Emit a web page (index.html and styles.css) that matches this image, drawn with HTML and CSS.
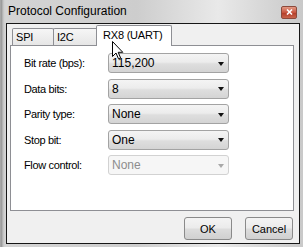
FILE: index.html
```html
<!DOCTYPE html>
<html lang="en">
<head>
    <meta charset="UTF-8">
    <title>Protocol Configuration</title>
    <link rel="stylesheet" href="styles.css">
</head>
<body>
    <div class="window">
        <div class="titlebar">
            <span class="title">Protocol Configuration</span>
            <span class="close">
                <svg width="7" height="6" viewBox="0 0 7 6"><path d="M1 0.5 L6 5.5 M6 0.5 L1 5.5" stroke="#fff" stroke-width="1.6"/></svg>
            </span>
        </div>

        <div class="client">
            <!-- Tabs -->
            <div class="tabs">
                <div class="tab tab-spi">SPI</div>
                <div class="tab tab-i2c">I2C</div>
                <div class="tab active">RX8 (UART)</div>
            </div>

            <div class="panel">
                <div class="row">
                    <span class="label">Bit rate (bps):</span>
                    <div class="combo"><span>115,200</span><i class="arrow"></i></div>
                </div>
                <div class="row">
                    <span class="label">Data bits:</span>
                    <div class="combo"><span>8</span><i class="arrow"></i></div>
                </div>
                <div class="row">
                    <span class="label">Parity type:</span>
                    <div class="combo"><span>None</span><i class="arrow"></i></div>
                </div>
                <div class="row">
                    <span class="label">Stop bit:</span>
                    <div class="combo"><span>One</span><i class="arrow"></i></div>
                </div>
                <div class="row">
                    <span class="label">Flow control:</span>
                    <div class="combo disabled"><span>None</span><i class="arrow"></i></div>
                </div>
            </div>

            <div class="buttons">
                <button class="btn">OK</button>
                <button class="btn">Cancel</button>
            </div>
        </div>

        <!-- mouse pointer over the tab -->
        <svg class="pointer" width="12" height="19" viewBox="0 0 12 19">
            <path d="M0.5 0.5 L0.5 15.5 L4 12 L6.5 17.8 L8.6 16.9 L6.2 11.3 L10.8 11.3 Z" fill="#fff" stroke="#000" stroke-width="1" stroke-linejoin="miter"/>
        </svg>
    </div>
</body>
</html>
```

FILE: styles.css
```css
* {
    margin: 0;
    padding: 0;
    box-sizing: border-box;
}

body {
    width: 303px;
    height: 247px;
    overflow: hidden;
    font-family: "Liberation Sans", Arial, sans-serif;
    color: #000;
}

.window {
    position: relative;
    width: 303px;
    height: 247px;
    padding: 0 3px 3px 6px;
    display: flex;
    flex-direction: column;
    background: linear-gradient(90deg, #bdbdbd 0, #8f8f8f 1px, #a9a9a9 2px, #cfcfcf 4px, #d4d4d4 6px, #cdcdcd 45%, #e9e9e9 72%, #d6d6d6 88%, #c9c9c9 100%);
}

.titlebar {
    height: 23px;
    display: flex;
    align-items: center;
    justify-content: space-between;
    padding: 0 3px 0 2px;
}

.title {
    font-size: 12px;
    margin-top: -1px;
}

.close {
    width: 16px;
    height: 13px;
    margin-top: 1px;
    border: 1px solid #8c4a3c;
    border-radius: 2px;
    background: linear-gradient(#e39a85, #c8553f 50%, #b23a26 51%, #c9654c);
    display: flex;
    align-items: center;
    justify-content: center;
}

.client {
    flex: 1;
    border: 1px solid #161616;
    background: #f0f0f0;
    display: flex;
    flex-direction: column;
    padding: 1px 5px 0 3px;
}

/* Tabs */
.tabs {
    height: 20px;
    display: flex;
    align-items: flex-end;
    padding-left: 2px;
}

.tab {
    height: 17px;
    border: 1px solid #8e8f94;
    border-bottom: none;
    border-radius: 2px 2px 0 0;
    background: linear-gradient(#f6f6f6, #e6e6e6);
    font-size: 11px;
    line-height: 16px;
    padding-left: 3px;
    letter-spacing: -0.2px;
}

.tab + .tab {
    margin-left: -1px;
}

.tab-spi {
    width: 42px;
}

.tab-i2c {
    width: 45px;
}

.tab.active {
    position: relative;
    z-index: 1;
    width: 76px;
    height: 21px;
    margin: 0 -2px -1px -2px;
    padding-left: 6px;
    line-height: 19px;
    background: #fff;
}

.panel {
    height: 166px;
    border: 1px solid #8e8f94;
    background: #fff;
    padding: 7px 0 0 13px;
    display: flex;
    flex-direction: column;
    gap: 5.5px;
}

.row {
    height: 20px;
    display: flex;
    align-items: center;
}

.label {
    width: 84px;
    font-size: 11px;
    letter-spacing: -0.35px;
}

.combo {
    width: 121px;
    height: 20px;
    border: 1px solid #a3a3a3;
    border-radius: 3px;
    background: linear-gradient(#f4f4f4, #ececec 45%, #dedede 55%, #d4d4d4);
    display: flex;
    align-items: center;
    justify-content: space-between;
    padding: 0 4px 0 3px;
    font-size: 12px;
}

.combo.disabled {
    border-color: #d2d2d2;
    background: #f6f6f6;
    color: #8d8d8d;
}

.arrow {
    width: 0;
    height: 0;
    border-left: 3.5px solid transparent;
    border-right: 3.5px solid transparent;
    border-top: 4px solid #111;
    margin-top: 1px;
}

.combo.disabled .arrow {
    border-top-color: #a8a8a8;
}

.buttons {
    flex: 1;
    display: flex;
    justify-content: flex-end;
    align-items: flex-start;
    gap: 13px;
    padding: 6px 1px 0 0;
}

.btn {
    width: 48px;
    height: 23px;
    border: 1px solid #8a8a8a;
    border-radius: 3px;
    background: linear-gradient(#f4f4f4, #ebebeb 48%, #dddddd 52%, #d0d0d0);
    font-family: "Liberation Sans", Arial, sans-serif;
    font-size: 11px;
    color: #000;
}

.pointer {
    position: absolute;
    left: 112px;
    top: 41px;
    z-index: 2;
}
```
